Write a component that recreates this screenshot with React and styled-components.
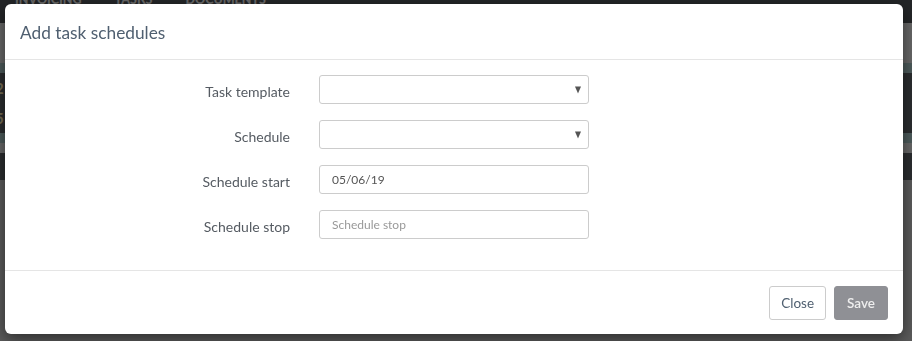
import React from "react";
import styled, { createGlobalStyle } from "styled-components";

const FONT = `Lato, "Open Sans", "Liberation Sans", sans-serif`;

const Global = createGlobalStyle`
  html, body { margin: 0; padding: 0; }
  body { font-family: ${FONT}; background: #b8b8b8; overflow: hidden; }
  * { box-sizing: border-box; }
`;

const Page = styled.div`
  width: 912px;
  height: 341px;
  display: flex;
  flex-direction: column;
  background: #b6b6b6;
`;

const NavBar = styled.div`
  height: 23px;
  background: #474b4f;
  display: flex;
  gap: 33px;
  padding-left: 15px;
  overflow: hidden;
`;

const NavItem = styled.span`
  margin-top: -6px;
  font-family: ${FONT};
  font-weight: 900;
  font-size: 12.5px;
  line-height: 1;
  color: #cfcfcf;
`;

const Band = styled.div`
  height: ${(p) => p.$h}px;
  background: ${(p) => p.$bg};
  display: flex;
  flex-direction: column;
  justify-content: space-around;
  overflow: hidden;
`;

const EdgeGlyph = styled.span`
  margin-left: -5px;
  font-size: 15px;
  font-weight: bold;
  color: #e8d9a8;
  line-height: 1;
`;

const Backdrop = styled.div`
  position: fixed;
  inset: 0;
  background: rgba(0, 0, 0, 0.5);
  display: flex;
  align-items: flex-start;
`;

const Dialog = styled.div`
  margin: 4px 9px 0 5px;
  flex: 1;
  height: 330px;
  background: #fff;
  border-radius: 6px;
  box-shadow: 0 5px 15px rgba(0, 0, 0, 0.5);
  display: flex;
  flex-direction: column;
`;

const Header = styled.div`
  height: 56px;
  padding: 0 15px;
  border-bottom: 1px solid #e5e5e5;
  display: flex;
  align-items: center;
`;

const Title = styled.h4`
  margin: 0;
  padding-top: 1px;
  font-weight: 400;
  font-size: 17.3px;
  color: #4f5f70;
`;

const Body = styled.div`
  flex: 1;
  padding: 15px;
  display: grid;
  grid-template-columns: 270px 270px;
  column-gap: 29px;
  row-gap: 16px;
  align-content: start;
`;

const Label = styled.label`
  text-align: right;
  font-size: 14px;
  color: #555b62;
  padding-top: 8px;
`;

const Field = styled.div`
  position: relative;
  height: 29px;
  border: 1px solid #cccccc;
  border-radius: 3px;
  display: flex;
  align-items: center;
  padding: 0 12px;
  font-size: 12px;
  color: ${(p) => (p.$placeholder ? "#999" : "#555")};
`;

const Caret = styled.span`
  position: absolute;
  right: 7px;
  top: 50%;
  transform: translateY(-50%);
  width: 0;
  height: 0;
  border-left: 3.5px solid transparent;
  border-right: 3.5px solid transparent;
  border-top: 7px solid #555;
`;

const Footer = styled.div`
  height: 64px;
  border-top: 1px solid #e5e5e5;
  padding: 15px 15px 15px 15px;
  display: flex;
  justify-content: flex-end;
  align-items: flex-start;
  gap: 8px;
`;

const Button = styled.button`
  height: 34px;
  padding: 0 ${(p) => (p.$primary ? 12 : 11)}px;
  border-radius: 3px;
  font-family: ${FONT};
  font-size: 13.5px;
  border: 1px solid ${(p) => (p.$primary ? "#8f9095" : "#cccccc")};
  background: ${(p) => (p.$primary ? "#8f9095" : "#fff")};
  color: ${(p) => (p.$primary ? "#eeeeee" : "#4f5f70")};
  font-weight: ${(p) => (p.$primary ? 600 : 400)};
`;

const rows = [
  { label: "Task template", select: true },
  { label: "Schedule", select: true },
  { label: "Schedule start", value: "05/06/19" },
  { label: "Schedule stop", placeholder: "Schedule stop" },
];

export default function App() {
  return (
    <>
      <Global />
      <Page>
        <NavBar>
          <NavItem>INVOICING</NavItem>
          <NavItem>TASKS</NavItem>
          <NavItem>DOCUMENTS</NavItem>
        </NavBar>
        <Band $h={40} $bg="#cecece" />
        <Band $h={10} $bg="#9ab6b6" />
        <Band $h={60} $bg="#565a5e">
          <EdgeGlyph>2</EdgeGlyph>
          <EdgeGlyph>5</EdgeGlyph>
        </Band>
        <Band $h={10} $bg="#9ab6b6" />
        <Band $h={10} $bg="#cecece" />
        <Band $h={27} $bg="#565a5e" />
      </Page>
      <Backdrop>
        <Dialog>
          <Header>
            <Title>Add task schedules</Title>
          </Header>
          <Body>
            {rows.map((r) => (
              <React.Fragment key={r.label}>
                <Label>{r.label}</Label>
                <Field $placeholder={!!r.placeholder}>
                  {r.value || r.placeholder || ""}
                  {r.select && <Caret />}
                </Field>
              </React.Fragment>
            ))}
          </Body>
          <Footer>
            <Button>Close</Button>
            <Button $primary>Save</Button>
          </Footer>
        </Dialog>
      </Backdrop>
    </>
  );
}
